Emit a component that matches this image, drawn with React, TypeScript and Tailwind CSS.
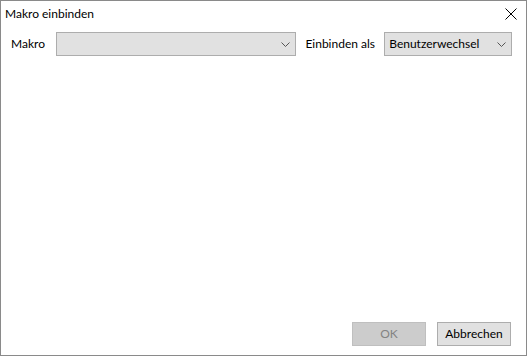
import React from "react";

function Chevron() {
  return (
    <svg width="9" height="5" viewBox="0 0 9 5" className="shrink-0">
      <path d="M0.5 0.5 L4.5 4.5 L8.5 0.5" fill="none" stroke="#555" strokeWidth="1" />
    </svg>
  );
}

export default function App() {
  return (
    <div
      className="w-[527px] h-[356px] bg-white border border-[#8a8a8a] flex flex-col text-[12px] text-black"
      style={{ fontFamily: 'Lato, "Noto Sans", sans-serif' }}
    >
      <div className="h-[28px] flex items-center justify-between pl-[4px] pr-[9px]">
        <span className="leading-none -mt-[2px]">Makro einbinden</span>
        <svg width="12" height="12" viewBox="0 0 12 12" className="-mt-[3px]">
          <path d="M0.5 0.5 L11.5 11.5 M11.5 0.5 L0.5 11.5" stroke="#000" strokeWidth="1" />
        </svg>
      </div>
      <div className="flex items-center h-[24px] mt-[3px] pl-[10px] pr-[14px]">
        <span className="w-[45px] leading-none">Makro</span>
        <div className="w-[241px] h-[24px] bg-[#e1e1e1] border border-[#adadad] flex items-center justify-end pr-[5px]">
          <Chevron />
        </div>
        <span className="ml-[9px] w-[79px] leading-none">Einbinden als</span>
        <div className="w-[128px] h-[24px] bg-[#e1e1e1] border border-[#adadad] flex items-center justify-between pl-[4px] pr-[5px]">
          <span className="leading-none">Benutzerwechsel</span>
          <Chevron />
        </div>
      </div>
      <div className="flex-1" />
      <div className="flex justify-end gap-[11px] pr-[15px] pb-[9px]">
        <div className="w-[74px] h-[24px] bg-[#cccccc] border border-[#bfbfbf] flex items-center justify-center text-[#838383] leading-none">
          OK
        </div>
        <div className="w-[74px] h-[24px] bg-[#e1e1e1] border border-[#adadad] flex items-center justify-center leading-none">
          Abbrechen
        </div>
      </div>
    </div>
  );
}
